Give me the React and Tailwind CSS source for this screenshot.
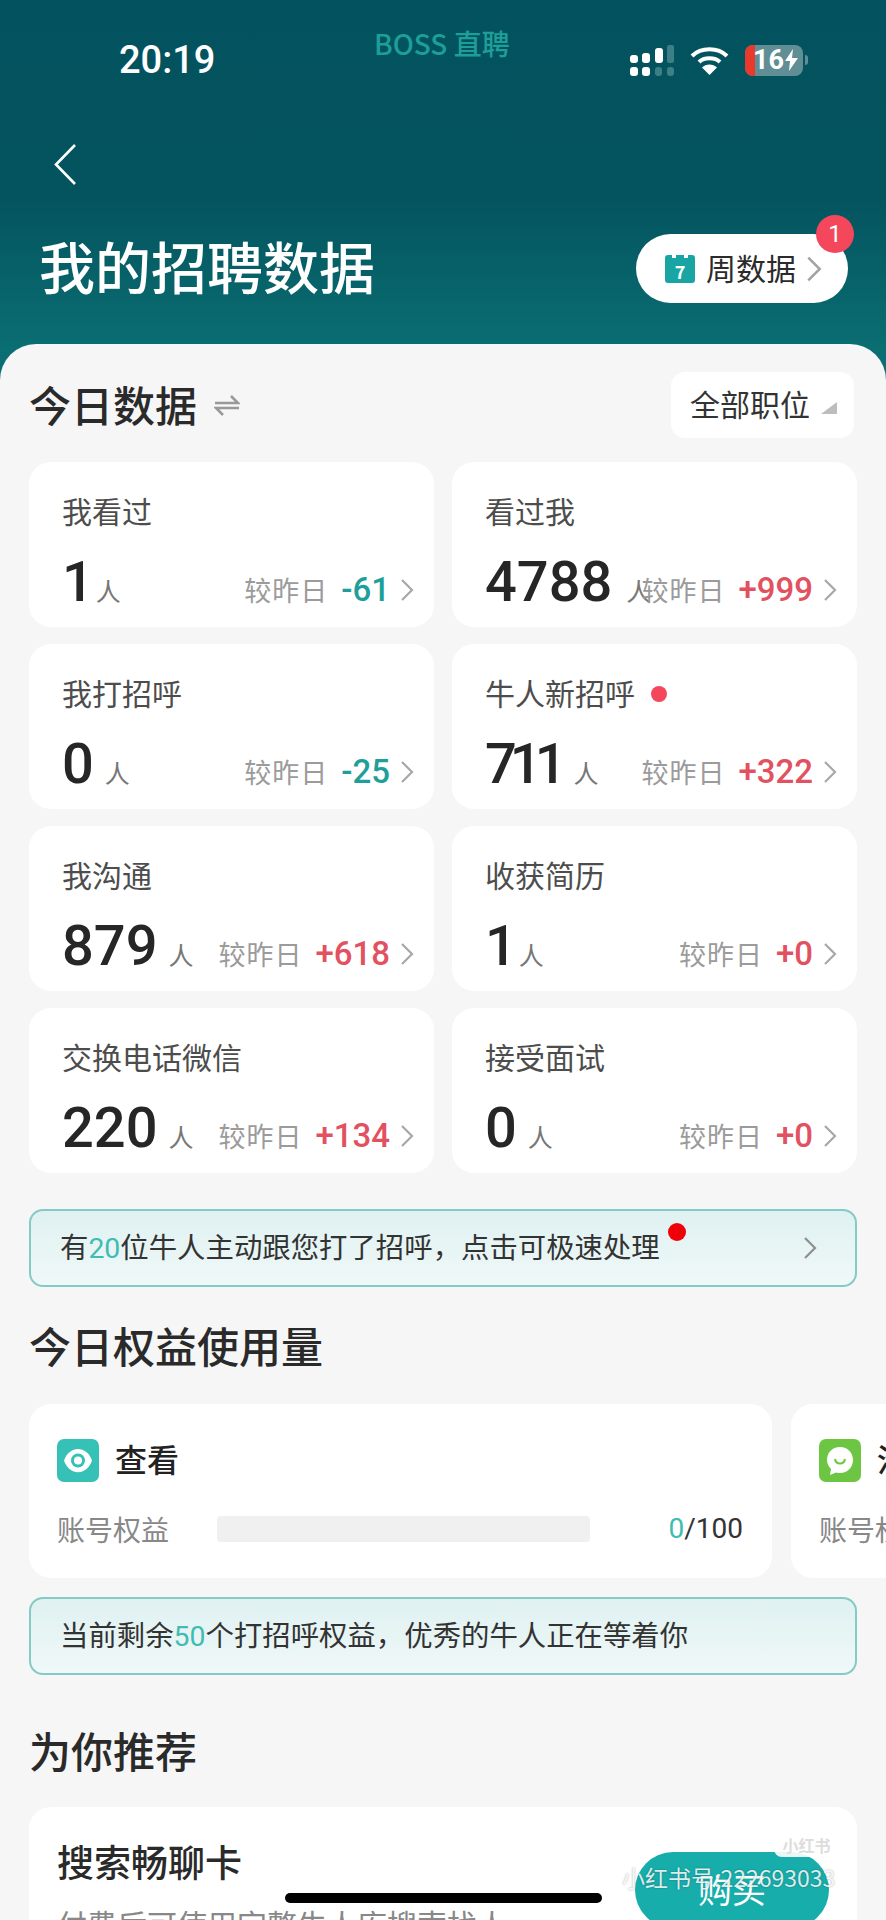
const stats = [
  { label: "我看过", value: "1", diff: "-61", up: false, unitGap: "ml-[2px]" },
  { label: "看过我", value: "4788", diff: "+999", up: true, unitGap: "ml-[14px]" },
  { label: "我打招呼", value: "0", diff: "-25", up: false, unitGap: "ml-[11px]" },
  { label: "牛人新招呼", value: "711", diff: "+322", up: true, dot: true, unitGap: "ml-[14px]", numClass: "tracking-[-7px]" },
  { label: "我沟通", value: "879", diff: "+618", up: true, unitGap: "ml-[11px]" },
  { label: "收获简历", value: "1", diff: "+0", up: true, unitGap: "ml-[2px]" },
  { label: "交换电话微信", value: "220", diff: "+134", up: true, unitGap: "ml-[11px]" },
  { label: "接受面试", value: "0", diff: "+0", up: true, unitGap: "ml-[11px]" },
];

const Chevron = ({ className }) => (
  <svg viewBox="0 0 14 24" className={className}>
    <path d="M2 2L12 12L2 22" fill="none" stroke="currentColor" strokeWidth="2.2" />
  </svg>
);

const StatCard = ({ item }) => (
  <div className="h-[165px] rounded-[22px] bg-white pt-[33px] pl-[33px] pr-[20px] whitespace-nowrap">
    <div className="flex h-[34px] text-[30px] leading-[30px] text-[#4d4d4d]">
      {item.label}
      {item.dot && <span className="self-center ml-[16px] w-[16px] h-[16px] rounded-full bg-[#f4475b]" />}
    </div>
    <div className="flex items-baseline mt-[23px] h-[60px]">
      <div className="flex-1 min-w-0 flex items-baseline">
        <span className={`font-['Roboto',sans-serif] font-medium text-[56px] leading-[60px] text-[#262626] ${item.numClass || ""}`}>
          {item.value}
        </span>
        <span className={`${item.unitGap} text-[25px] text-[#777]`}>人</span>
      </div>
      <span className="text-[27px] tracking-[1px] text-[#9b9b9b]">较昨日</span>
      <span
        className={
          item.up
            ? "ml-[13px] font-['Roboto',sans-serif] font-medium text-[33px] text-[#e2515f]"
            : "ml-[13px] font-['Roboto',sans-serif] font-medium text-[33px] text-[#1f9f9b]"
        }
      >
        {item.diff}
      </span>
      <Chevron className="ml-[10px] self-center mt-[16px] w-[14px] h-[24px] flex-none text-[#a8a8a8]" />
    </div>
  </div>
);

const Banner = ({ children }) => (
  <div className="flex items-center justify-between h-[78px] rounded-[14px] border-2 border-[#84cac6] bg-gradient-to-b from-[#dff1f1] to-[#f0f8f8] pl-[29px] pr-[38px] text-[28.4px] text-[#333] whitespace-nowrap">
    {children}
  </div>
);

const BenefitCard = ({ icon, title, value }) => (
  <div className="w-[743px] h-[174px] flex-none rounded-[22px] bg-white pl-[28px] pr-[29px] pt-[35px]">
    <div className="flex items-center h-[43px] gap-[16px]">
      {icon}
      <span className="pb-[6px] text-[32px] font-medium text-[#222]">{title}</span>
    </div>
    <div className="flex items-center mt-[28px] h-[38px] text-[28px] text-[#888] whitespace-nowrap">
      <span className="w-[160px]">账号权益</span>
      <div className="w-[373px] h-[26px] rounded-[4px] bg-[#f0f0f0]" />
      <span className="ml-auto font-['Roboto',sans-serif] text-[#333]">
        <span className="text-[#3fbcb3]">{value}</span>/100
      </span>
    </div>
  </div>
);

const EyeIcon = () => (
  <svg width="42" height="43" viewBox="0 0 42 43" className="flex-none">
    <rect width="42" height="43" rx="7" fill="#36c1b6" />
    <path d="M7 21.5C12 6 30 6 35 21.5C30 37 12 37 7 21.5Z" fill="#fff" />
    <circle cx="21" cy="21.5" r="7" fill="#36c1b6" />
    <circle cx="21" cy="21.5" r="4" fill="#fff" />
  </svg>
);

const ChatIcon = () => (
  <svg width="42" height="43" viewBox="0 0 42 43" className="flex-none">
    <rect width="42" height="43" rx="7" fill="#6cc644" />
    <path d="M21 8C13 8 8 14 8 21C8 25 10 28 12 30L11 36L17 33.5C27 36 34 29 34 21C34 14 29 8 21 8Z" fill="#fff" />
    <path d="M16 20C17 26 25 26 26 20" fill="none" stroke="#6cc644" strokeWidth="2" />
  </svg>
);

export default function App() {
  return (
    <div className="relative h-screen overflow-hidden bg-[linear-gradient(180deg,#03525f_0px,#04545f_200px,#0a6e72_350px)] font-['Noto_Sans_CJK_SC',sans-serif]">
      {/* header */}
      <div className="relative h-[344px] pt-[40px]">
        <div className="flex items-center h-[40px] pl-[119px] pr-[78px]">
          <span className="font-['Roboto',sans-serif] font-medium text-[38px] text-white">20:19</span>
          <div className="ml-auto flex items-center gap-[16px]">
            <svg width="44" height="31" viewBox="0 0 44 31">
              <g fill="#fff">
                <rect x="0" y="10" width="8" height="8" rx="3" />
                <rect x="12" y="8" width="8" height="10" rx="3" />
                <rect x="25" y="3" width="8" height="15" rx="3" />
                <rect x="0" y="22" width="8" height="9" rx="3" />
                <rect x="12" y="22" width="8" height="9" rx="3" />
              </g>
              <g fill="#3c7f86">
                <rect x="37" y="0" width="7" height="18" rx="2" />
                <rect x="25" y="22" width="7" height="9" rx="3" />
                <rect x="37" y="22" width="7" height="9" rx="3" />
              </g>
            </svg>
            <svg width="39" height="29" viewBox="0 0 39 29">
              <path d="M2 10C11 1 28 1 37 10" fill="none" stroke="#fff" strokeWidth="4" />
              <path d="M9 16C14 11 25 11 30 16" fill="none" stroke="#fff" strokeWidth="4" />
              <path d="M19.5 29L12 21.5C16 17.5 23 17.5 27 21.5Z" fill="#fff" />
            </svg>
            <div className="flex items-center">
              <div className="relative flex items-center w-[58px] h-[31px] rounded-[8px] overflow-hidden bg-[#5f8f94]">
                <div className="absolute left-0 top-0 bottom-0 w-[10px] bg-[#e8392c]" />
                <span className="relative ml-[8px] font-['Roboto',sans-serif] font-bold text-[27px] leading-none text-white">
                  16
                </span>
                <svg width="13" height="22" viewBox="0 0 13 22" className="relative ml-[1px] flex-none">
                  <path d="M8 0L0 12H5L4 22L13 9H7Z" fill="#fff" />
                </svg>
              </div>
              <div className="ml-[2px] w-[3px] h-[10px] rounded-r bg-[#5f8f94]" />
            </div>
          </div>
        </div>
        <span className="absolute left-[374px] top-[24px] text-[28px] leading-[38px] font-medium text-[#1d9f98] whitespace-nowrap">
          BOSS 直聘
        </span>

        <div className="pl-[54px] mt-[64px] h-[41px]">
          <svg width="22" height="41" viewBox="0 0 22 41">
            <path d="M21 1L2 20.5L21 40" fill="none" stroke="#fff" strokeWidth="2.6" />
          </svg>
        </div>

        <div className="flex items-center justify-between pl-[39px] pr-[38px] mt-[49px] h-[69px]">
          <h1 className="pb-[7px] text-[56px] font-medium text-white whitespace-nowrap">我的招聘数据</h1>
          <div className="relative flex items-center w-[212px] h-[69px] rounded-full bg-white pl-[29px]">
            <svg width="30" height="30" viewBox="0 0 30 30" className="flex-none">
              <path d="M3 1H7V4H11V1H19V4H23V1H27C29 1 30 2 30 4V26C30 28 29 29 27 29H3C1 29 0 28 0 26V4C0 2 1 1 3 1Z" fill="#18a5a3" />
              <text x="15" y="25" textAnchor="middle" fontSize="18" fontWeight="600" fill="#fff">7</text>
            </svg>
            <span className="ml-[11px] pb-[3px] text-[30px] text-[#2b2b2b] whitespace-nowrap">周数据</span>
            <Chevron className="ml-[10px] w-[16px] h-[28px] flex-none text-[#a3a3a3]" />
            <span className="absolute -top-[19px] right-[-6px] flex items-center justify-center w-[38px] h-[38px] rounded-full bg-[#f4475b] font-['Roboto',sans-serif] text-[24px] text-white">
              1
            </span>
          </div>
        </div>
      </div>

      {/* sheet */}
      <div className="bg-[#f6f6f6] rounded-t-[36px] px-[29px] pt-[28px] h-[1576px]">
        <div className="flex items-center justify-between h-[66px] pr-[3px]">
          <div className="flex items-center">
            <span className="pb-[4px] text-[42px] font-medium text-[#2a2a2a]">今日数据</span>
            <svg width="26" height="22" viewBox="0 0 26 22" className="ml-[17px]">
              <path d="M1 9H24L17 2" fill="none" stroke="#999" strokeWidth="2.6" />
              <path d="M25 14H2L9 21" fill="none" stroke="#999" strokeWidth="2.6" />
            </svg>
          </div>
          <div className="flex items-center w-[183px] h-[66px] rounded-[14px] bg-white pl-[19px] text-[30px] text-[#333] whitespace-nowrap">
            <span className="pb-[4px]">全部职位</span>
            <svg width="16" height="12" viewBox="0 0 16 12" className="ml-[11px] mt-[6px]">
              <path d="M0 12L16 0V12Z" fill="#bdbdbd" />
            </svg>
          </div>
        </div>

        <div className="grid grid-cols-2 gap-x-[18px] gap-y-[17px] mt-[24px]">
          {stats.map((item) => (
            <StatCard key={item.label} item={item} />
          ))}
        </div>

        <div className="mt-[36px]">
          <Banner>
            <span className="relative">
              有<span className="font-['Roboto',sans-serif] text-[#3fbcb3]">20</span>位牛人主动跟您打了招呼，点击可极速处理
              <span className="absolute -right-[26px] top-[-2px] w-[18px] h-[18px] rounded-full bg-[#f00008]" />
            </span>
            <Chevron className="w-[14px] h-[24px] flex-none text-[#8f8f8f]" />
          </Banner>
        </div>

        <h2 className="mt-[31px] h-[60px] text-[42px] leading-[54px] font-medium text-[#2a2a2a]">今日权益使用量</h2>

        <div className="flex gap-[19px] mt-[26px] w-[1505px]">
          <BenefitCard icon={<EyeIcon />} title="查看" value="0" />
          <BenefitCard icon={<ChatIcon />} title="沟通" value="0" />
        </div>

        <div className="mt-[19px]">
          <Banner>
            <span>
              当前剩余<span className="font-['Roboto',sans-serif] text-[#3fbcb3]">50</span>个打招呼权益，优秀的牛人正在等着你
            </span>
          </Banner>
        </div>

        <h2 className="mt-[47px] h-[60px] text-[42px] leading-[56px] font-medium text-[#2a2a2a]">为你推荐</h2>

        <div className="flex justify-between mt-[25px] h-[300px] rounded-[22px] bg-white px-[28px]">
          <div className="whitespace-nowrap">
            <div className="mt-[30px] text-[37px] leading-[48px] font-medium text-[#2a2a2a]">搜索畅聊卡</div>
            <div className="mt-[18px] text-[30px] leading-[40px] text-[#888]">付费后可使用完整牛人库搜索找人</div>
          </div>
          <button className="mt-[45px] pb-[4px] w-[194px] h-[76px] rounded-full bg-[#17adab] text-[34px] text-white">
            购买
          </button>
        </div>
      </div>

      {/* overlays: watermark and home indicator */}
      <div className="absolute left-[774px] top-[1832px] flex items-center justify-center w-[65px] h-[25px] rounded-[8px] bg-white/90 text-[16px] font-bold text-[#ddd] whitespace-nowrap">
        小红书
      </div>
      <div className="absolute left-[622px] top-[1861px] text-[23px] leading-[32px] text-white/85 whitespace-nowrap [text-shadow:0_0_2px_rgba(0,0,0,0.35)]">
        小红书号:222693033
      </div>
      <div className="absolute left-[285px] top-[1893px] w-[317px] h-[10px] rounded-full bg-black" />
    </div>
  );
}
